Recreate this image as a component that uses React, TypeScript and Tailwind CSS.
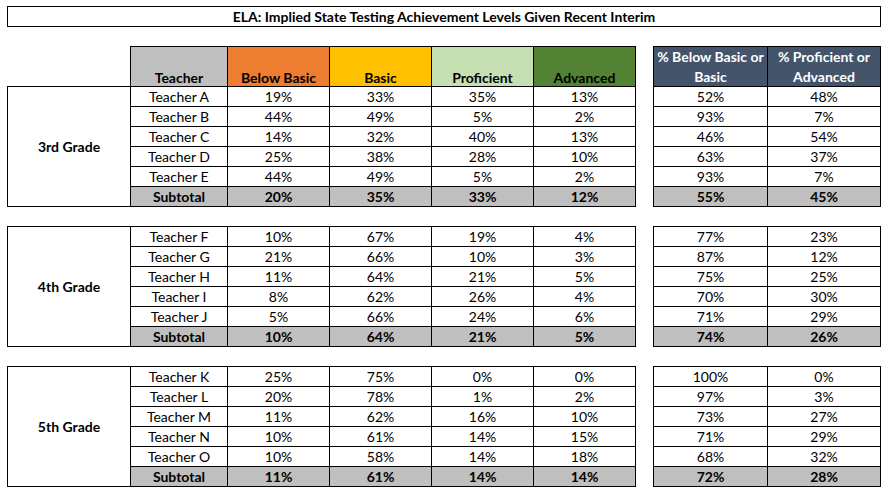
const font = { fontFamily: "Lato, 'Open Sans', sans-serif" };

type Row = { teacher: string; v: [string, string, string, string]; r: [string, string] };

const sections: { grade: string; rows: Row[]; subtotal: Row }[] = [
  {
    grade: "3rd Grade",
    rows: [
      { teacher: "Teacher A", v: ["19%", "33%", "35%", "13%"], r: ["52%", "48%"] },
      { teacher: "Teacher B", v: ["44%", "49%", "5%", "2%"], r: ["93%", "7%"] },
      { teacher: "Teacher C", v: ["14%", "32%", "40%", "13%"], r: ["46%", "54%"] },
      { teacher: "Teacher D", v: ["25%", "38%", "28%", "10%"], r: ["63%", "37%"] },
      { teacher: "Teacher E", v: ["44%", "49%", "5%", "2%"], r: ["93%", "7%"] },
    ],
    subtotal: { teacher: "Subtotal", v: ["20%", "35%", "33%", "12%"], r: ["55%", "45%"] },
  },
  {
    grade: "4th Grade",
    rows: [
      { teacher: "Teacher F", v: ["10%", "67%", "19%", "4%"], r: ["77%", "23%"] },
      { teacher: "Teacher G", v: ["21%", "66%", "10%", "3%"], r: ["87%", "12%"] },
      { teacher: "Teacher H", v: ["11%", "64%", "21%", "5%"], r: ["75%", "25%"] },
      { teacher: "Teacher I", v: ["8%", "62%", "26%", "4%"], r: ["70%", "30%"] },
      { teacher: "Teacher J", v: ["5%", "66%", "24%", "6%"], r: ["71%", "29%"] },
    ],
    subtotal: { teacher: "Subtotal", v: ["10%", "64%", "21%", "5%"], r: ["74%", "26%"] },
  },
  {
    grade: "5th Grade",
    rows: [
      { teacher: "Teacher K", v: ["25%", "75%", "0%", "0%"], r: ["100%", "0%"] },
      { teacher: "Teacher L", v: ["20%", "78%", "1%", "2%"], r: ["97%", "3%"] },
      { teacher: "Teacher M", v: ["11%", "62%", "16%", "10%"], r: ["73%", "27%"] },
      { teacher: "Teacher N", v: ["10%", "61%", "14%", "15%"], r: ["71%", "29%"] },
      { teacher: "Teacher O", v: ["10%", "58%", "14%", "18%"], r: ["68%", "32%"] },
    ],
    subtotal: { teacher: "Subtotal", v: ["11%", "61%", "14%", "14%"], r: ["72%", "28%"] },
  },
];

// column widths taken from the sheet's gridlines
const cols = "grid grid-cols-[123px_97px_102px_102px_102px_103px_17px_114px_114px]";

function Cell({ text, bottom, sub, right }: { text: string; bottom?: boolean; sub?: boolean; right?: boolean }) {
  return (
    <div
      className={`border-l border-t border-black flex items-end justify-center leading-[18px] ${
        right ? "border-r" : ""
      } ${bottom ? "border-b h-[21px]" : "h-[20px]"} ${sub ? "bg-[#bfbfbf] font-bold" : "bg-white"}`}
    >
      {text}
    </div>
  );
}

function Section({ grade, rows, subtotal }: { grade: string; rows: Row[]; subtotal: Row }) {
  const all = [...rows, subtotal];
  return (
    <div className={`${cols} grid-rows-[20px_20px_20px_20px_20px_21px]`}>
      <div className="row-span-6 border-l border-t border-b border-black flex items-center justify-center font-bold pb-[1px]">
        {grade}
      </div>
      {all.map((row, i) => {
        const sub = i === all.length - 1;
        return [
          <Cell key={`t${i}`} text={row.teacher} bottom={sub} sub={sub} />,
          ...row.v.map((v, j) => <Cell key={`v${i}${j}`} text={v} bottom={sub} sub={sub} right={j === 3} />),
          <div key={`g${i}`} />,
          <Cell key={`r${i}a`} text={row.r[0]} bottom={sub} sub={sub} />,
          <Cell key={`r${i}b`} text={row.r[1]} bottom={sub} sub={sub} right />,
        ];
      })}
    </div>
  );
}

export default function App() {
  const headers = [
    { label: "Teacher", cls: "bg-[#bfbfbf]" },
    { label: "Below Basic", cls: "bg-[#ed7d31]" },
    { label: "Basic", cls: "bg-[#ffc000]" },
    { label: "Proficient", cls: "bg-[#c6e0b4]" },
    { label: "Advanced", cls: "bg-[#548235] border-r" },
  ];

  return (
    <div className="w-[882px] h-[487px] bg-white text-black text-[14px] pt-[6px] pl-[7px] overflow-hidden" style={font}>
      <div className="w-[874px] h-[21px] border border-black flex items-center justify-center font-bold pb-[1px]">
        ELA: Implied State Testing Achievement Levels Given Recent Interim
      </div>

      <div className={`${cols} mt-[19px] h-[40px]`}>
        <div />
        {headers.map((h) => (
          <div
            key={h.label}
            className={`border-l border-t border-black flex items-end justify-center leading-[18px] font-bold ${h.cls}`}
          >
            {h.label}
          </div>
        ))}
        <div />
        <div className="border-l border-t border-black bg-[#44546a] text-white font-bold text-center leading-[20px]">
          % Below Basic or
          <br />
          Basic
        </div>
        <div className="border-l border-t border-r border-black bg-[#44546a] text-white font-bold text-center leading-[20px]">
          % Proficient or
          <br />
          Advanced
        </div>
      </div>

      <div className="flex flex-col gap-[19px]">
        {sections.map((s) => (
          <Section key={s.grade} {...s} />
        ))}
      </div>
    </div>
  );
}
